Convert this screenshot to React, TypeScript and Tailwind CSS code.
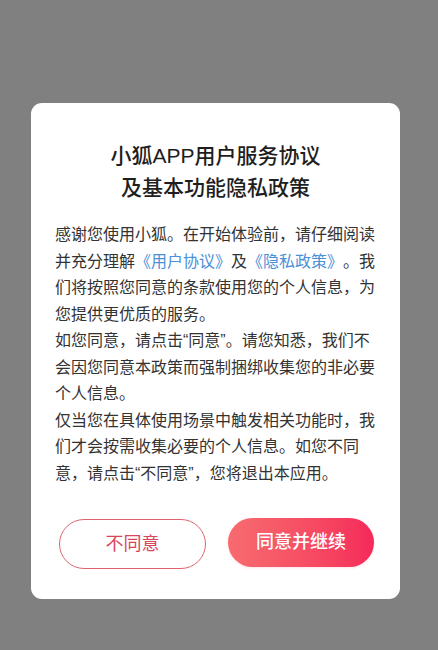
import React from 'react';

const paragraphs = [
  '如您同意，请点击“同意”。请您知悉，我们不会因您同意本政策而强制捆绑收集您的非必要个人信息。',
  '仅当您在具体使用场景中触发相关功能时，我们才会按需收集必要的个人信息。如您不同意，请点击“不同意”，您将退出本应用。',
];

export default function App() {
  const [agreed, setAgreed] = React.useState<boolean | null>(null);

  return (
    <div className="w-[438px] h-[650px] bg-[#808080] pl-[31px] pt-[103px] font-['Liberation_Sans','Noto_Sans_CJK_SC',sans-serif] [text-spacing-trim:space-all]">
      <div className="w-[369px] h-[496px] bg-white rounded-[11px] flex flex-col">
        <div className="pt-[37px] text-center text-[21px] leading-[32px] font-medium text-[#1e1e1e]">
          <div>小狐APP用户服务协议</div>
          <div>及基本功能隐私政策</div>
        </div>

        <div className="mt-[18px] px-6 text-[16px] leading-[26.5px] text-[#333333]">
          <p>
            感谢您使用小狐。在开始体验前，请仔细阅读并充分理解
            <span className="text-[#4a8fd8]">《用户协议》</span>及
            <span className="text-[#4a8fd8]">《隐私政策》</span>
            。我们将按照您同意的条款使用您的个人信息，为您提供更优质的服务。
          </p>
          {paragraphs.map((text, i) => (
            <p key={i}>{text}</p>
          ))}
        </div>

        <div className="mt-auto pb-[30px] pl-[28px] flex flex-row gap-[22px]">
          <button
            onClick={() => setAgreed(false)}
            className="w-[147px] h-[50px] rounded-full border-[1.5px] border-[#e0646f] text-[#d9455a] text-[18px] bg-white cursor-pointer"
          >
            不同意
          </button>
          <button
            onClick={() => setAgreed(true)}
            className="w-[146px] h-[49px] -mt-px rounded-full bg-gradient-to-r from-[#f76b6f] to-[#f5285a] text-white text-[18px] font-medium shadow-[0_1px_3px_rgba(245,40,90,0.15)] cursor-pointer"
          >
            同意并继续
          </button>
        </div>
      </div>
      {agreed !== null && <span className="hidden">{String(agreed)}</span>}
    </div>
  );
}
